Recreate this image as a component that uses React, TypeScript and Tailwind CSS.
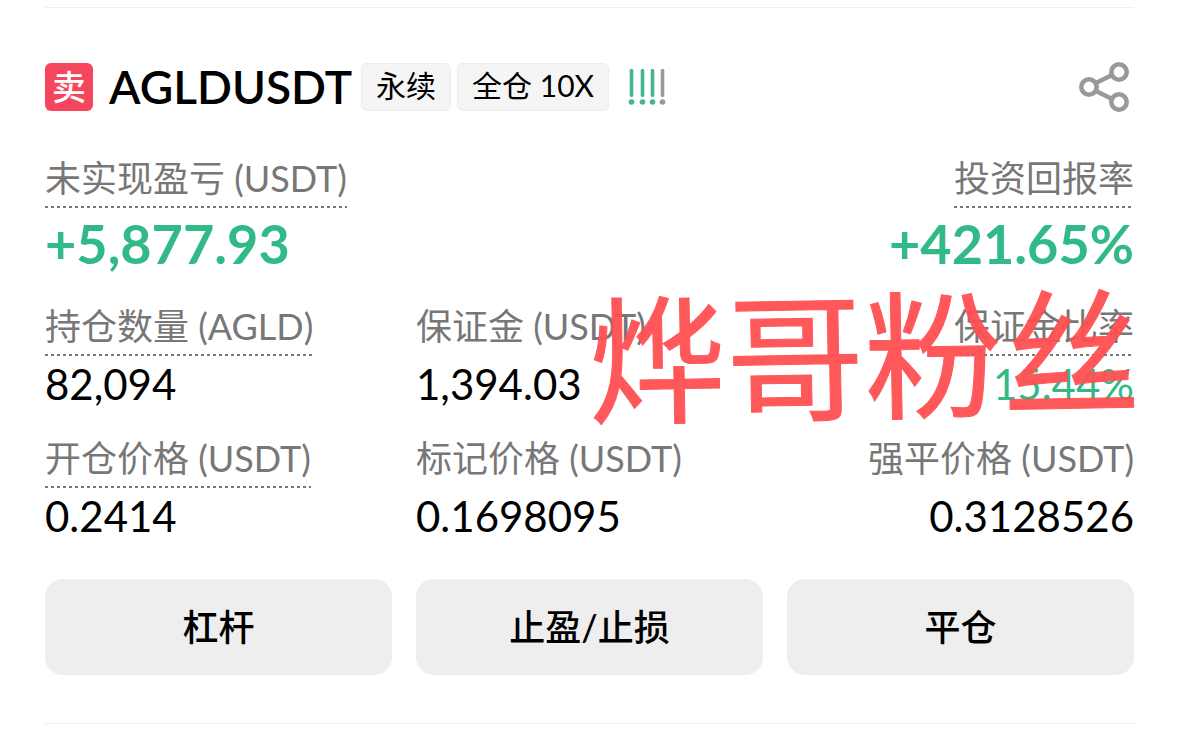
import { FC } from "react";
import clsx from "clsx";

type Stat = {
  label: string;
  value: string;
  hint?: boolean;
  positive?: boolean;
};

const SUMMARY: Stat[] = [
  { label: "未实现盈亏 (USDT)", value: "+5,877.93", hint: true },
  { label: "投资回报率", value: "+421.65%", hint: true },
];

const DETAILS: Stat[] = [
  { label: "持仓数量 (AGLD)", value: "82,094", hint: true },
  { label: "保证金 (USDT)", value: "1,394.03" },
  { label: "保证金比率", value: "15.44%", hint: true, positive: true },
  { label: "开仓价格 (USDT)", value: "0.2414", hint: true },
  { label: "标记价格 (USDT)", value: "0.1698095" },
  { label: "强平价格 (USDT)", value: "0.3128526" },
];

const ACTIONS = ["杠杆", "止盈/止损", "平仓"];

const App: FC = () => (
  <main className="bg-white px-[45px] pt-[7px] font-['Lato','Noto_Sans_CJK_SC',sans-serif] text-black">
    <article className="border-y border-[#efefef] pt-[53px] pb-12">
      <header className="flex items-center">
        <span className="flex size-12 items-center justify-center rounded-md bg-[#f6465d] text-[34px] leading-none font-medium text-white">
          卖
        </span>
        <h1 className="ml-4 text-[46px] leading-12 font-semibold">AGLDUSDT</h1>
        <div className="ml-[9px] flex gap-1.5">
          <Tag>永续</Tag>
          <Tag>全仓 10X</Tag>
        </div>
        <RiskLevel />
        <button type="button" aria-label="分享" className="ml-auto">
          <ShareIcon />
        </button>
      </header>

      <dl className="mt-[45px] flex justify-between">
        {SUMMARY.map((stat, i) => (
          <div key={stat.label} className={clsx(i === 1 && "text-right")}>
            <StatLabel stat={stat} />
            <dd className="mt-2 text-[54px] leading-14 font-bold text-[#31ba87]">{stat.value}</dd>
          </div>
        ))}
      </dl>

      <div className="relative mt-[34px]">
        <dl className="grid grid-cols-3 gap-x-6 gap-y-[30px]">
          {DETAILS.map((stat, i) => (
            <div key={stat.label} className={clsx(i % 3 === 2 && "text-right")}>
              <StatLabel stat={stat} />
              <dd
                className={clsx(
                  "mt-1 text-[42px] leading-12",
                  stat.positive && "text-[#31ba87]"
                )}
              >
                {stat.value}
              </dd>
            </div>
          ))}
        </dl>
        <p className="pointer-events-none absolute -top-5 -right-1.5 -rotate-1 text-[138px] leading-[140px] whitespace-nowrap text-[#ff5053] opacity-95 [-webkit-text-stroke:1px_#ff5053]">
          烨哥粉丝
        </p>
      </div>

      <div className="mt-[39px] grid grid-cols-3 gap-6">
        {ACTIONS.map((action) => (
          <button
            key={action}
            type="button"
            className="h-24 rounded-[18px] bg-[#eeeeee] text-[36px] leading-10 font-medium"
          >
            {action}
          </button>
        ))}
      </div>
    </article>
  </main>
);

const Tag: FC<{ children: string }> = ({ children }) => (
  <span className="flex h-12 items-center rounded-md border border-[#ececec] bg-[#f5f5f5] px-3.5 pb-1 text-[30px] leading-10">
    {children}
  </span>
);

const StatLabel: FC<{ stat: Stat }> = ({ stat }) => (
  <dt>
    <span
      className={clsx(
        "inline-block pb-2.5 align-top text-[36px] leading-10 text-[#777777]",
        stat.hint &&
          "bg-[linear-gradient(90deg,#777_3px,transparent_3px)] bg-[length:6px_2px] bg-left-bottom bg-repeat-x"
      )}
    >
      {stat.label}
    </span>
  </dt>
);

const RiskLevel: FC = () => (
  <svg width="38" height="36" viewBox="0 0 38 36" className="ml-[19px]" aria-hidden="true">
    {[3.5, 14.5, 24.5, 34.5].map((x, i) => (
      <g key={x} fill={i < 3 ? "#45b58b" : "#999999"}>
        <rect x={x - 1.8} y="0" width="3.6" height="28" rx="1.4" />
        <circle cx={x} cy="33" r="2.8" />
      </g>
    ))}
  </svg>
);

const ShareIcon: FC = () => (
  <svg
    width="56"
    height="52"
    viewBox="0 0 56 52"
    fill="none"
    stroke="#999999"
    strokeWidth="4.6"
    aria-hidden="true"
  >
    <circle cx="11" cy="26" r="7.7" />
    <circle cx="41" cy="11" r="7.7" />
    <circle cx="41" cy="41" r="7.7" />
    <path d="M17.5 22.2 34.5 13.7M17.5 29.8 34.5 38.3" />
  </svg>
);

export default App;
